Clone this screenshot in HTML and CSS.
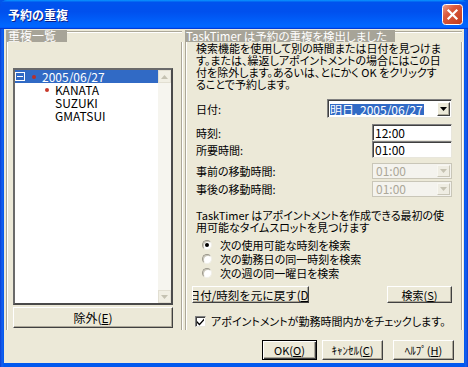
FILE: index.html
```html
<!DOCTYPE html>
<html lang="ja">
<head>
<meta charset="utf-8">
<title>予約の重複</title>
<link rel="stylesheet" href="styles.css">
</head>
<body>
<div class="window">
  <header class="titlebar">
    <span class="title">予約の重複</span>
    <span class="close">
      <svg width="21" height="21" viewBox="0 0 21 21">
        <defs>
          <linearGradient id="cg" x1="0" y1="0" x2="1" y2="1">
            <stop offset="0" stop-color="#EFA58F"/>
            <stop offset="0.35" stop-color="#DA5A3E"/>
            <stop offset="1" stop-color="#C13A1C"/>
          </linearGradient>
        </defs>
        <rect x="0.5" y="0.5" width="20" height="20" rx="3" fill="url(#cg)" stroke="#fff"/>
        <path d="M6.5 6.5 L14.5 14.5 M14.5 6.5 L6.5 14.5" stroke="#fff" stroke-width="2.2" stroke-linecap="square"/>
      </svg>
    </span>
  </header>
  <main class="client">
    <div class="panes">
      <section class="group group-left">
        <div class="group-head"><span class="legend legend-left">重複一覧</span><span class="rule"></span></div>
        <div class="group-body left-body">
          <div class="listbox">
            <ul class="tree">
              <li class="node sel">
                <svg class="expander" width="10" height="9" viewBox="0 0 10 9"><rect x="0.5" y="0.5" width="9" height="8" fill="none" stroke="#fff"/><path d="M2 4.5 H8" stroke="#fff"/></svg>
                <span class="dot"></span><span class="node-text">2005/06/27</span>
              </li>
              <li class="node child"><span class="dot"></span><span class="node-text">KANATA</span></li>
              <li class="node leaf">SUZUKI</li>
              <li class="node leaf">GMATSUI</li>
            </ul>
            <div class="vscroll">
              <span class="sbtn"><svg width="7" height="4" viewBox="0 0 7 4"><path d="M0 4 L3.5 0 L7 4 Z" fill="#C5C2B2"/></svg></span>
              <span class="track"></span>
              <span class="sbtn"><svg width="7" height="4" viewBox="0 0 7 4"><path d="M0 0 L7 0 L3.5 4 Z" fill="#C5C2B2"/></svg></span>
            </div>
          </div>
          <button class="btn btn-exclude">除外(<u>E</u>)</button>
        </div>
      </section>
      <section class="group group-right">
        <div class="group-head"><span class="legend legend-right">TaskTimer は予約の重複を検出しました</span><span class="rule"></span></div>
        <div class="group-body right-body">
          <p class="para p1">検索機能を使用して別の時間または日付を見つけま<br>す。または、繰返しアポイントメントの場合にはこの日<br>付を除外します。あるいは、とにかく OK をクリックす<br>ることで予約します。</p>
          <div class="field f-date">
            <span class="flabel">日付:</span>
            <div class="combo combo-date">
              <span class="combo-text"><span class="hl">明日, 2005/06/27</span></span>
              <span class="ddbtn"><svg width="7" height="4" viewBox="0 0 7 4"><path d="M0 0 L7 0 L3.5 4 Z" fill="#000"/></svg></span>
            </div>
          </div>
          <div class="field f-time"><span class="flabel">時刻:</span><span class="textbox">12:00</span></div>
          <div class="field f-dur"><span class="flabel">所要時間:</span><span class="textbox">01:00</span></div>
          <div class="field f-pre">
            <span class="flabel">事前の移動時間:</span>
            <div class="combo combo-dis"><span class="combo-text">01:00</span><span class="ddbtn"><svg width="7" height="4" viewBox="0 0 7 4"><path d="M0 0 L7 0 L3.5 4 Z" fill="#C5C2B2"/></svg></span></div>
          </div>
          <div class="field f-post">
            <span class="flabel">事後の移動時間:</span>
            <div class="combo combo-dis"><span class="combo-text">01:00</span><span class="ddbtn"><svg width="7" height="4" viewBox="0 0 7 4"><path d="M0 0 L7 0 L3.5 4 Z" fill="#C5C2B2"/></svg></span></div>
          </div>
          <p class="para p2">TaskTimer はアポイントメントを作成できる最初の使<br>用可能なタイムスロットを見つけます</p>
          <ul class="radios">
            <li><span class="radio on"></span>次の使用可能な時刻を検索</li>
            <li><span class="radio"></span>次の勤務日の同一時刻を検索</li>
            <li><span class="radio"></span>次の週の同一曜日を検索</li>
          </ul>
          <div class="actions">
            <button class="btn btn-reset"><span class="btn-label">日付/時刻を元に戻す(<u>D</u>)</span></button>
            <button class="btn btn-search">検索(<u>S</u>)</button>
          </div>
          <div class="check">
            <span class="checkbox"><svg width="9" height="9" viewBox="0 0 9 9"><path d="M1 4 L3.5 6.5 L8 1.5 V3.5 L3.5 8.5 L1 6 Z" fill="#000"/></svg></span>
            <span>アポイントメントが勤務時間内かをチェックします。</span>
          </div>
        </div>
      </section>
    </div>
    <div class="footer">
      <button class="btn btn-ok">OK(<u>O</u>)</button>
      <button class="btn btn-cancel">ｷｬﾝｾﾙ(<u>C</u>)</button>
      <button class="btn btn-help">ﾍﾙﾌﾟ(<u>H</u>)</button>
    </div>
  </main>
</div>
</body>
</html>
```

FILE: styles.css
```css
* { box-sizing: border-box; }
html, body { margin: 0; padding: 0; }
body {
  width: 468px;
  height: 367px;
  overflow: hidden;
  background: #0055EA;
  font-family: "Noto Sans CJK JP", "Noto Sans", sans-serif;
  font-size: 11px;
  color: #000;
}
ul, p { margin: 0; padding: 0; list-style: none; }
u { text-decoration: underline; text-underline-offset: 1px; }

.window {
  width: 468px;
  height: 367px;
  display: flex;
  flex-direction: column;
  background: linear-gradient(90deg, #0A3ED4 0, #1560EE 2px, #0058EE 4px, #0058EE 464px, #1560EE 466px, #0A3ED4 468px);
  border-radius: 7px 7px 0 0;
  overflow: hidden;
}

.titlebar {
  height: 29px;
  flex: none;
  display: flex;
  align-items: center;
  padding: 0 5px 0 8px;
  background: linear-gradient(180deg, #0997FF 0, #0053EE 8%, #0050EE 40%, #0066FF 88%, #0066FF 93%, #005BFF 95%, #003DD7 96%, #003DD7 100%);
}
.title {
  flex: 1;
  color: #fff;
  font-weight: bold;
  font-size: 12px;
  line-height: 14px;
  text-shadow: 1px 1px 0 #0A1E8A;
}
.close { width: 21px; height: 21px; display: block; }
.close svg { display: block; }

.client {
  flex: 1;
  margin: 0 4px 4px 4px;
  background: #ECE9D8;
  display: flex;
  flex-direction: column;
  min-height: 0;
}

.panes {
  display: flex;
  gap: 3px;
  padding: 1px 2px 0 2px;
  height: 301px;
  flex: none;
}

.group { display: flex; flex-direction: column; min-width: 0; }
.group-left { width: 176px; flex: none; }
.group-right { flex: 1 1 0; }

.group-head { display: flex; height: 12px; flex: none; }
.legend {
  background: #A7A498;
  color: #fff;
  line-height: 12px;
  height: 12px;
  padding-left: 2px;
  white-space: nowrap;
  flex: none;
}
.legend-left { width: 61px; font-size: 12px; }
.legend-right { width: 210px; padding-left: 1px; font-size: 11.5px; font-feature-settings: "palt"; }
.rule {
  flex: 1;
  height: 2px;
  margin-top: 1px;
  border-top: 1px solid #ACA899;
  border-bottom: 1px solid #fff;
}

.group-body {
  flex: 1;
  border-left: 1px solid #ACA899;
  border-right: 1px solid #ACA899;
  box-shadow: inset 1px 0 0 #fff, 1px 0 0 #fff;
  display: flex;
  flex-direction: column;
  min-width: 0;
}

/* left */
.left-body { padding: 26px 8px 0 6px; }
.listbox {
  height: 237px;
  border: 2px solid;
  border-color: #6A6A6A #4A4A4A #4A4A4A #6A6A6A;
  background: #fff;
  display: flex;
  flex: none;
}
.tree { flex: 1; min-width: 0; font-size: 12px; }
.node {
  height: 13px;
  line-height: 13px;
  display: flex;
  align-items: center;
  white-space: nowrap;
}
.node.sel { background: #316AC5; color: #fff; }
.expander { display: block; flex: none; }
.dot { width: 4px; height: 4px; border-radius: 50%; background: #C8382A; flex: none; }
.sel .dot { margin-left: 7px; background: #B8302A; }
.sel .node-text { margin-left: 6px; }
.child { padding-left: 30px; }
.child .node-text { margin-left: 6px; }
.leaf { padding-left: 40px; }

.vscroll {
  width: 13px;
  flex: none;
  display: flex;
  flex-direction: column;
  background: #F6F5EF;
}
.sbtn {
  width: 13px;
  height: 13px;
  flex: none;
  background: #F1EFE4;
  border: 1px solid #E2DFD2;
  display: flex;
  align-items: center;
  justify-content: center;
}
.sbtn svg { display: block; }
.track { flex: 1; }

.btn {
  font: inherit;
  font-size: 11px;
  color: #000;
  background: #ECE9D8;
  border: 1px solid;
  border-color: #fff #404040 #404040 #fff;
  box-shadow: inset -1px -1px 0 #ACA899;
  padding: 0;
  margin: 0;
  display: flex;
  align-items: center;
  justify-content: center;
  white-space: nowrap;
  overflow: hidden;
  line-height: 14px;
  flex: none;
}
.btn-exclude { margin-top: 2px; height: 21px; width: 100%; font-size: 12px; }

/* right */
.right-body { padding: 0 9px 0 10px; font-feature-settings: "palt"; }
.para { line-height: 12px; white-space: nowrap; }
.p1 { margin-top: 0; }
.field {
  display: flex;
  align-items: center;
  justify-content: space-between;
  white-space: nowrap;
  flex: none;
}
.f-date { margin-top: 9px; height: 19px; }
.f-time { margin-top: 6px; height: 17px; }
.f-dur { height: 17px; }
.f-pre { margin-top: 5px; height: 16px; }
.f-post { margin-top: 2px; height: 16px; }

.textbox {
  width: 80px;
  height: 100%;
  background: #fff;
  border: 1px solid;
  border-color: #808080 #E8E6DC #E8E6DC #808080;
  box-shadow: inset 1px 1px 0 #404040;
  padding-left: 2px;
  line-height: 15px;
  display: flex;
  align-items: center;
  font-size: 12px;
}

.combo {
  height: 100%;
  display: flex;
  align-items: stretch;
  background: #fff;
  border: 1px solid;
  border-color: #808080 #E8E6DC #E8E6DC #808080;
  box-shadow: inset 1px 1px 0 #404040;
  padding: 2px 1px 1px 2px;
}
.combo-date { width: 125px; }
.combo-text { flex: 1; display: flex; align-items: center; line-height: 12px; }
.hl { background: #316AC5; color: #fff; line-height: 11px; height: 11px; display: flex; align-items: center; padding-right: 1px; font-size: 12px; }
.ddbtn {
  width: 13px;
  flex: none;
  background: #ECE9D8;
  border: 1px solid;
  border-color: #fff #404040 #404040 #fff;
  box-shadow: inset -1px -1px 0 #ACA899;
  display: flex;
  align-items: center;
  justify-content: center;
}
.ddbtn svg { display: block; }
.combo-dis {
  width: 80px;
  background: #F4F3EE;
  border-color: #C9C6B8;
  box-shadow: none;
  padding: 1px;
  color: #ACA899;
  font-size: 12px;
}
.combo-dis .combo-text { padding-left: 2px; }
.combo-dis .ddbtn { border-color: #F8F7F2 #C9C6B8 #C9C6B8 #F8F7F2; box-shadow: none; background: #EFEDE3; }

.p2 { margin-top: 12px; }
.radios { margin-top: 5px; }
.radios li {
  height: 14px;
  display: flex;
  align-items: center;
  padding-left: 6px;
  white-space: nowrap;
}
.radio {
  width: 10px;
  height: 10px;
  border-radius: 50%;
  background: #fff;
  border: 1px solid;
  border-color: #9A978A #F0EFE8 #F0EFE8 #9A978A;
  box-shadow: inset 1px 1px 0 #C8C5B8;
  margin-right: 8px;
  position: relative;
  flex: none;
}
.radio.on::after {
  content: "";
  position: absolute;
  left: 2px;
  top: 2px;
  width: 4px;
  height: 4px;
  border-radius: 50%;
  background: #000;
}

.actions {
  margin-top: 6px;
  display: flex;
  justify-content: space-between;
  height: 17px;
  flex: none;
}
.btn-reset { width: 117px; margin-left: -4px; height: 100%; font-feature-settings: normal; font-size: 11.5px; }
.btn-search { width: 65px; height: 100%; }

.check {
  margin-top: 11px;
  display: flex;
  align-items: center;
  height: 14px;
  white-space: nowrap;
  flex: none;
}
.checkbox {
  width: 11px;
  height: 11px;
  background: #fff;
  border: 1px solid;
  border-color: #808080 #E8E6DC #E8E6DC #808080;
  box-shadow: inset 1px 1px 0 #404040;
  display: flex;
  align-items: center;
  justify-content: center;
  margin-right: 5px;
  margin-left: -1px;
  flex: none;
}
.checkbox svg { display: block; }

.footer {
  display: flex;
  justify-content: flex-end;
  padding: 10px 10px 0 0;
}
.footer .btn { height: 20px; }
.btn-ok {
  width: 55px;
  margin-right: 5px;
  border: 1px solid #000;
  box-shadow: inset 1px 1px 0 #fff, inset -1px -1px 0 #404040, inset -2px -2px 0 #ACA899;
}
.btn-cancel { width: 61px; margin-right: 10px; }
.btn-help { width: 61px; }
```
